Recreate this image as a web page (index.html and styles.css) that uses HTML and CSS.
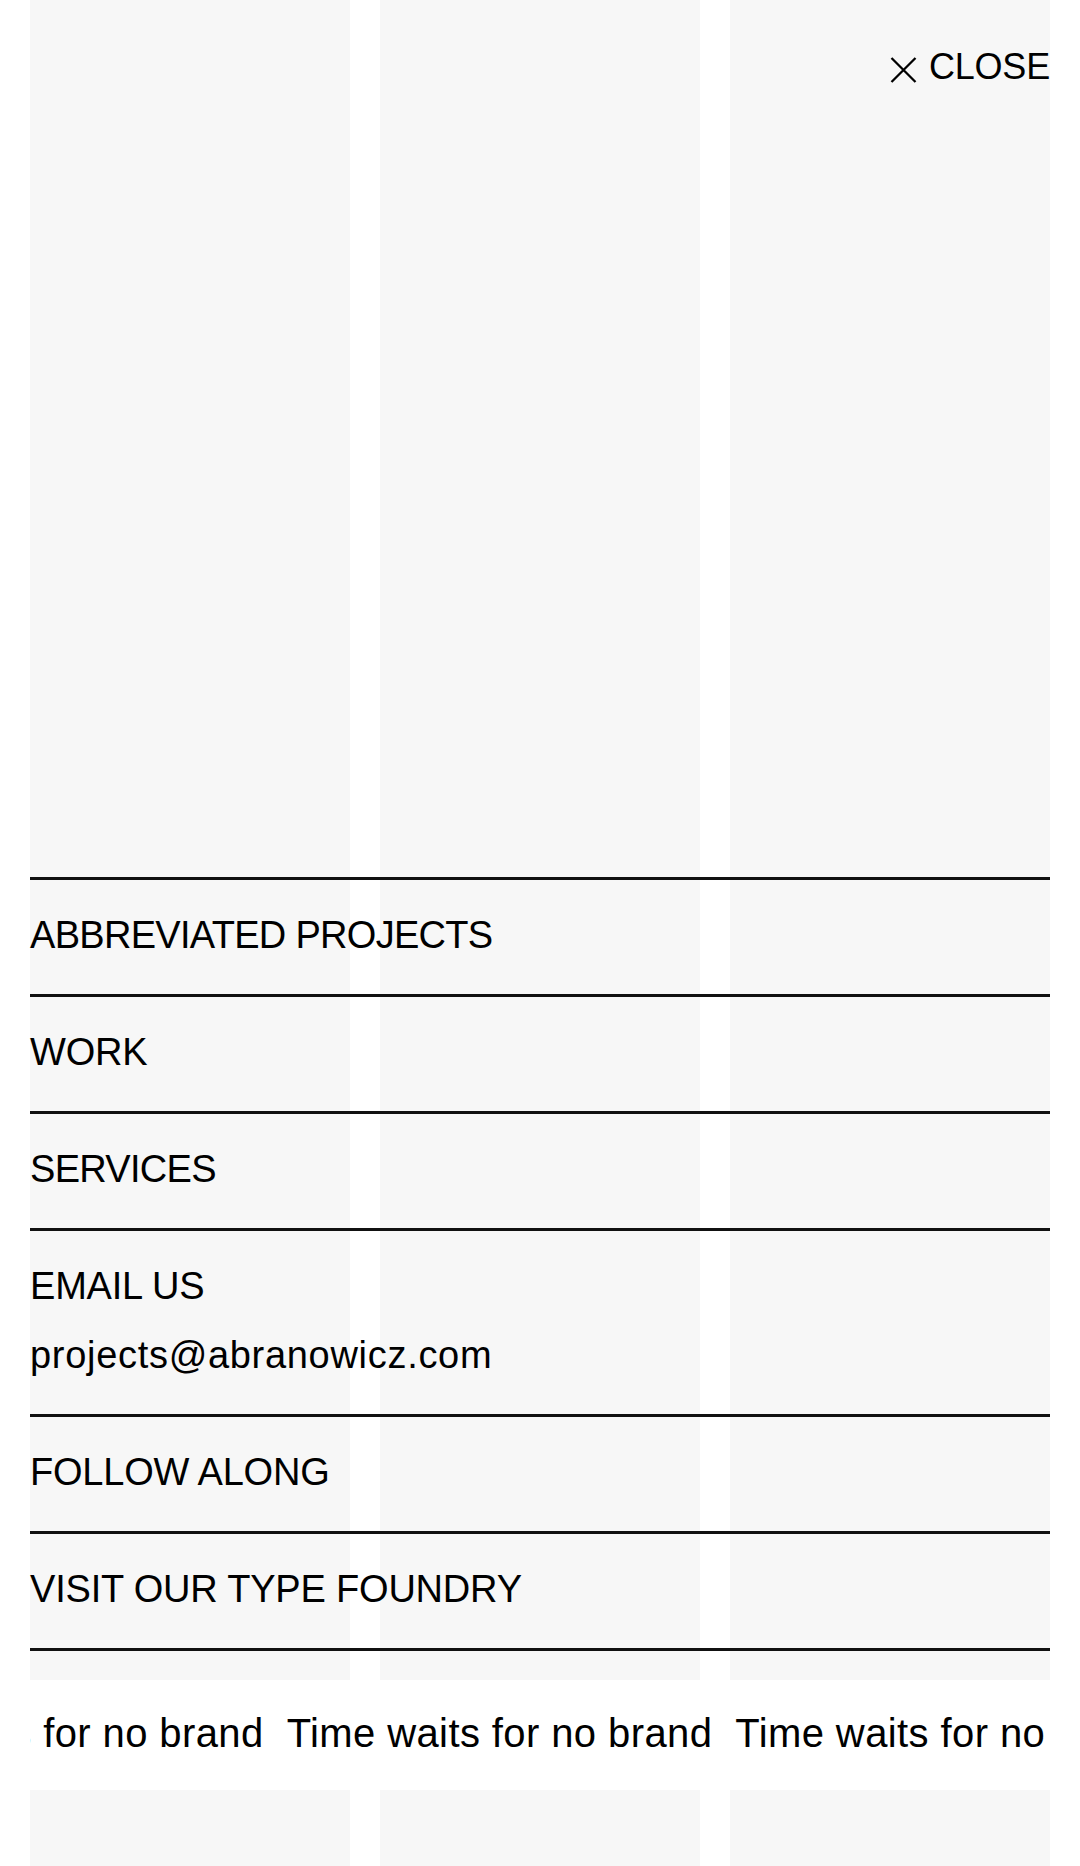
FILE: index.html
```html
<!DOCTYPE html>
<html lang="en">
<head>
<meta charset="utf-8">
<title>Menu</title>
<link rel="stylesheet" href="styles.css">
</head>
<body>
<div class="page">
  <section class="tiles tiles-top">
    <div class="tile"></div>
    <div class="tile"></div>
    <div class="tile"></div>
  </section>
  <section class="ticker">
    <div class="ticker-track">
      <span class="ticker-item">Time waits for no brand</span>
      <span class="ticker-item">Time waits for no brand</span>
      <span class="ticker-item">Time waits for no brand</span>
      <span class="ticker-item">Time waits for no brand</span>
    </div>
  </section>
  <section class="tiles tiles-bottom">
    <div class="tile"></div>
    <div class="tile"></div>
    <div class="tile"></div>
  </section>

  <div class="menu">
    <div class="menu-head">
      <button class="close">
        <svg class="close-icon" width="27" height="26" viewBox="0 0 27 26" aria-hidden="true">
          <path d="M1.5 1 L25.5 25 M25.5 1 L1.5 25" stroke="#000" stroke-width="2.3" fill="none"/>
        </svg>
        <span class="close-label">CLOSE</span>
      </button>
    </div>
    <nav class="menu-list">
      <a class="menu-row menu-row-tight">ABBREVIATED PROJECTS</a>
      <a class="menu-row">WORK</a>
      <a class="menu-row menu-row-tight">SERVICES</a>
      <div class="menu-row menu-row-email">
        <span>EMAIL US</span>
        <span class="email">projects@abranowicz.com</span>
      </div>
      <a class="menu-row">FOLLOW ALONG</a>
      <a class="menu-row menu-row-last">VISIT OUR TYPE FOUNDRY</a>
    </nav>
  </div>
</div>
</body>
</html>
```

FILE: styles.css
```css
* {
  box-sizing: border-box;
}

html, body {
  margin: 0;
  padding: 0;
  background: #ffffff;
}

body {
  width: 1080px;
  height: 1866px;
  overflow: hidden;
  font-family: "Liberation Sans", Arial, sans-serif;
  color: #000;
}

.page {
  position: relative;
  width: 1080px;
  height: 1866px;
  overflow: hidden;
}

.tiles {
  display: grid;
  grid-template-columns: repeat(3, 1fr);
  column-gap: 30px;
  padding: 0 30px;
}

.tiles-top .tile {
  height: 1680px;
}

.tiles-bottom .tile {
  height: 76px;
}

.tile {
  background: #f7f7f7;
}

.ticker {
  margin: 0 30px;
  height: 110px;
  padding-top: 33px;
  overflow: hidden;
}

.ticker-track {
  display: flex;
  white-space: nowrap;
  transform: translateX(-192px);
}

.ticker-item {
  flex: none;
  font-size: 40px;
  line-height: 40px;
  letter-spacing: 0.4px;
  padding-right: 23px;
}

.menu {
  position: absolute;
  top: 0;
  left: 30px;
  right: 30px;
  height: 1651px;
  display: flex;
  flex-direction: column;
  justify-content: space-between;
}

.menu-head {
  display: flex;
  justify-content: flex-end;
  padding-top: 49px;
}

.close {
  display: flex;
  align-items: flex-end;
  gap: 12px;
  background: none;
  border: 0;
  padding: 0;
  margin: 0;
  color: #000;
  font-family: inherit;
  cursor: pointer;
}

.close-icon {
  display: block;
  margin-bottom: 2px;
}

.close-label {
  font-size: 36px;
  line-height: 36px;
  letter-spacing: -0.2px;
}

.menu-list {
  display: flex;
  flex-direction: column;
}

.menu-row {
  display: flex;
  flex-direction: column;
  gap: 31px;
  border-top: 3px solid #111;
  padding: 36px 0 40px;
  font-size: 38px;
  line-height: 38px;
  letter-spacing: -0.2px;
  color: #000;
  text-decoration: none;
}

.menu-row-tight {
  letter-spacing: -0.7px;
}

.menu-row-last {
  border-bottom: 3px solid #111;
}

.email {
  letter-spacing: 0.7px;
}
```
